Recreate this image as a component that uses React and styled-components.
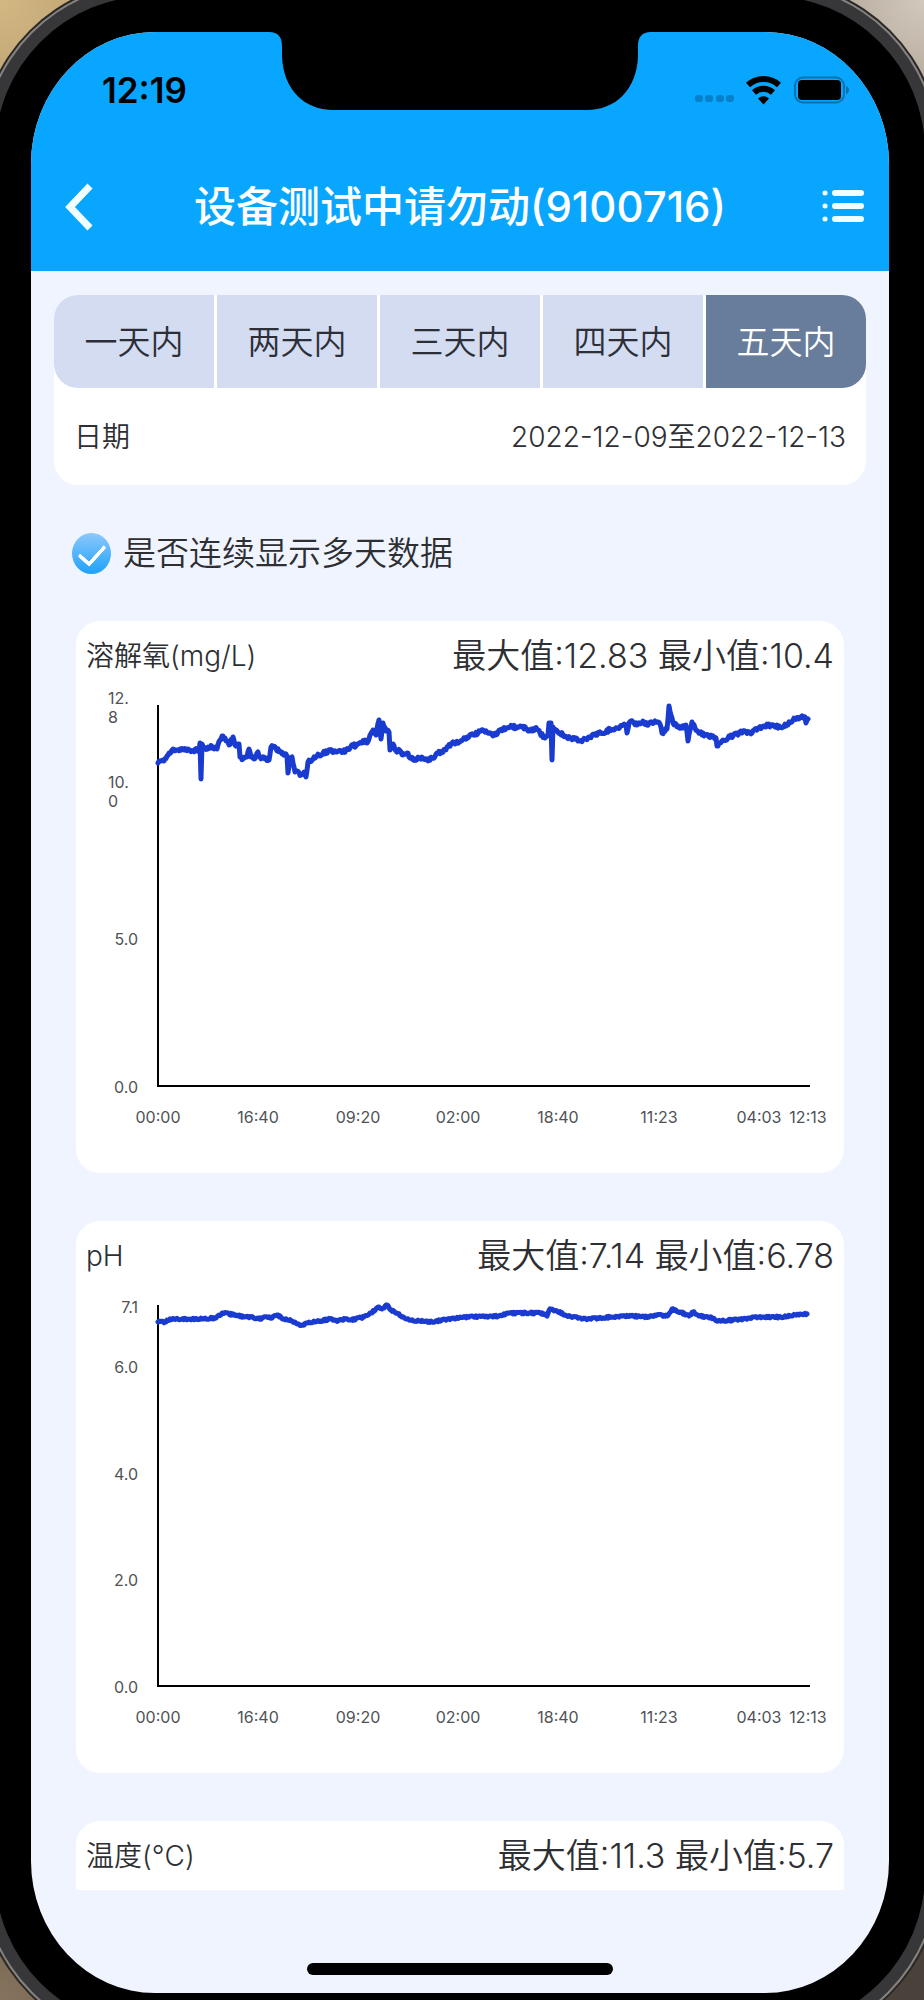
import React, { useState } from 'react';
import styled, { createGlobalStyle } from 'styled-components';

const GlobalStyle = createGlobalStyle`
  * {
    box-sizing: border-box;
  }

  body {
    margin: 0;
    font-family: Inter, 'Noto Sans CJK SC', sans-serif;
    color: #2d2f33;
  }

  button {
    font-family: inherit;
    border: none;
    padding: 0;
    background: none;
    cursor: pointer;
  }
`;

// Desk behind the phone, only visible in the four corners
const Desk = styled.div`
  display: flex;
  flex-direction: column;
  height: 100vh;
  overflow: hidden;
  background:
    radial-gradient(circle at 0 0, #d3b883 0, #bfa574 90px, transparent 110px),
    radial-gradient(circle at 100% 0, #d2c8bc 0, #b5aa9c 90px, transparent 110px),
    radial-gradient(circle at 0 100%, #85735d 0, #75644f 90px, transparent 110px),
    #4b413b;
`;

const Bezel = styled.div`
  flex: 1;
  min-height: 0;
  display: flex;
  margin: -4px -1px -29px -5px;
  padding: 36px;
  border-radius: 156px;
  background: #000;
  box-shadow: 0 0 0 12px #37373a, 0 0 0 14px #85827f, 0 0 0 16px #2a2826;
`;

const Screen = styled.div`
  position: relative;
  flex: 1;
  min-width: 0;
  display: flex;
  flex-direction: column;
  overflow: hidden;
  border-radius: 124px / 132px;
  background: #f0f4ff;
`;

const Notch = styled.svg`
  position: absolute;
  top: 0;
  left: 50%;
  width: 382px;
  height: 78px;
  transform: translateX(-50%);
`;

const Header = styled.header`
  background: #08a6ff;
`;

const StatusBar = styled.div`
  display: flex;
  align-items: center;
  justify-content: space-between;
  height: 111px;
  padding: 5px 40px 0 71px;
  color: #000;
`;

const Clock = styled.span`
  font-size: 35px;
  font-weight: 600;
  line-height: 40px;
`;

const StatusIcons = styled.svg`
  width: 154px;
  height: 32px;
`;

const NavBar = styled.nav`
  display: grid;
  grid-template-columns: 44px 1fr 44px;
  align-items: center;
  height: 128px;
  padding: 0 24px;
`;

const Title = styled.h1`
  margin: 0;
  font-size: 42px;
  font-weight: 500;
  line-height: 56px;
  text-align: center;
  white-space: nowrap;
  color: #fff;
`;

const IconButton = styled.button`
  display: flex;
  align-items: center;
  justify-content: center;
  height: 56px;
  color: #f2ffff;
`;

const Content = styled.main`
  flex: 1;
  min-height: 0;
  overflow-y: auto;
  scrollbar-width: none;
  padding: 24px 23px 48px;
`;

const RangePanel = styled.section`
  border-radius: 24px;
  background: #fff;
`;

const Tabs = styled.div`
  display: grid;
  grid-template-columns: repeat(5, 1fr);
  gap: 3px;
  overflow: hidden;
  border-radius: 24px;
`;

const Tab = styled.button`
  height: 93px;
  font-size: 33px;
  font-weight: 350;
  line-height: 40px;
  background: ${({ $active }) => ($active ? '#687c9b' : '#d3dcf1')};
  color: ${({ $active }) => ($active ? '#fff' : '#2d2f38')};
`;

const DateRow = styled.div`
  display: flex;
  align-items: center;
  justify-content: space-between;
  height: 97px;
  padding: 0 20px;
  font-size: 28px;
  font-weight: 350;
  line-height: 40px;
`;

const CheckRow = styled.label`
  display: flex;
  align-items: center;
  gap: 12px;
  height: 136px;
  padding: 0 18px;
  font-size: 33px;
  font-weight: 350;
  line-height: 40px;
  cursor: pointer;
`;

const CheckBox = styled.input`
  appearance: none;
  display: flex;
  justify-content: center;
  flex: none;
  width: 39px;
  height: 41px;
  margin: 0;
  border-radius: 50%;
  background: #fff;

  &:checked {
    background: linear-gradient(#8cc8fb, #1ea2fb);
  }

  &:checked::before {
    content: '';
    width: 12px;
    height: 22px;
    margin-top: 6px;
    border: solid #fff;
    border-width: 0 4px 4px 0;
    border-radius: 2px;
    transform: rotate(42deg);
  }
`;

const ChartList = styled.div`
  display: flex;
  flex-direction: column;
  gap: 48px;
  padding: 0 22px;
`;

const Card = styled.section`
  min-height: 552px;
  border-radius: 24px;
  background: #fff;
`;

const CardHeader = styled.div`
  display: flex;
  align-items: center;
  justify-content: space-between;
  height: 70px;
  padding: 0 10px;
`;

const CardTitle = styled.h2`
  margin: 0;
  font-size: 28px;
  font-weight: 350;
  line-height: 40px;
`;

const Extremes = styled.span`
  font-size: 34px;
  font-weight: 350;
  line-height: 40px;
`;

const Plot = styled.svg`
  display: block;
  width: 100%;

  text {
    font-size: 16px;
    fill: #505256;
  }
`;

const HomeArea = styled.footer`
  display: flex;
  align-items: flex-end;
  justify-content: center;
  height: 103px;
  padding-bottom: 18px;
`;

const HomeIndicator = styled.div`
  width: 306px;
  height: 12px;
  border-radius: 6px;
  background: #000;
`;

const ranges = ['一天内', '两天内', '三天内', '四天内', '五天内'];

const timeTicks = [
  ['00:00', 82],
  ['16:40', 182],
  ['09:20', 282],
  ['02:00', 382],
  ['18:40', 482],
  ['11:23', 583],
  ['04:03', 683],
  ['12:13', 732],
];

const oxygen = [
  [82, 72], [88, 70], [91, 65], [93, 62], [96, 59], [101, 59], [104, 58], [108, 59], [112, 58],
  [117, 60], [121, 58], [123, 60], [124, 52], [125, 88], [126, 53], [129, 58], [132, 56], [137, 56],
  [141, 58], [144, 49], [147, 45], [150, 50], [153, 54], [157, 46], [159, 54], [163, 53], [164, 66],
  [167, 68], [171, 66], [173, 58], [175, 66], [178, 68], [182, 61], [184, 66], [189, 68], [193, 69],
  [195, 56], [197, 56], [200, 58], [204, 60], [207, 62], [211, 65], [212, 82], [214, 67], [216, 66],
  [218, 76], [219, 81], [221, 80], [225, 84], [228, 81], [230, 86], [232, 71], [236, 69], [241, 65],
  [247, 62], [254, 60], [261, 61], [267, 61], [274, 57], [277, 54], [280, 55], [286, 52], [289, 49],
  [291, 52], [296, 41], [298, 40], [300, 44], [303, 29], [305, 48], [307, 32], [310, 40], [313, 41],
  [314, 59], [317, 53], [320, 60], [324, 60], [327, 64], [331, 62], [334, 67], [339, 68], [344, 67],
  [351, 69], [357, 67], [362, 62], [367, 61], [371, 56], [376, 52], [384, 51], [391, 46], [397, 44],
  [402, 42], [407, 39], [412, 42], [419, 44], [424, 39], [431, 37], [436, 35], [441, 37], [446, 36],
  [451, 38], [456, 40], [459, 37], [464, 42], [469, 47], [472, 44], [473, 32], [475, 32], [476, 69],
  [477, 36], [480, 39], [484, 42], [489, 45], [494, 47], [499, 48], [504, 50], [509, 48], [514, 46],
  [519, 44], [524, 41], [529, 42], [534, 38], [539, 38], [544, 36], [550, 34], [551, 42], [553, 32],
  [557, 31], [561, 34], [568, 31], [571, 34], [576, 32], [579, 30], [582, 31], [585, 36], [586, 42],
  [591, 38], [593, 15], [596, 27], [597, 32], [602, 35], [607, 37], [610, 34], [612, 50], [614, 39],
  [616, 31], [619, 37], [624, 42], [629, 44], [636, 46], [640, 47], [641, 55], [647, 49], [654, 46],
  [661, 43], [667, 40], [676, 42], [682, 37], [692, 34], [704, 36], [711, 34], [717, 29], [726, 25],
  [729, 26], [730, 32], [732, 28],
];

const ph = [
  [82, 31], [89, 31], [94, 28], [106, 28], [122, 28], [140, 27], [147, 22], [160, 24], [168, 26],
  [175, 26], [183, 28], [191, 26], [196, 27], [201, 24], [208, 28], [216, 30], [221, 33], [226, 34],
  [231, 32], [244, 30], [254, 28], [262, 30], [269, 28], [275, 29], [288, 26], [295, 22], [303, 16],
  [306, 18], [311, 14], [315, 19], [321, 22], [326, 26], [333, 29], [344, 30], [356, 31], [372, 28],
  [392, 26], [423, 25], [433, 22], [453, 22], [466, 22], [471, 25], [474, 18], [481, 20], [489, 24],
  [497, 26], [510, 28], [525, 27], [535, 26], [555, 25], [573, 26], [581, 24], [591, 25], [596, 18],
  [604, 21], [613, 25], [617, 21], [624, 25], [637, 27], [642, 30], [657, 29], [683, 26], [708, 26],
  [724, 23], [731, 23],
];

const charts = [
  {
    name: '溶解氧(mg/L)',
    max: '12.83',
    min: '10.4',
    points: oxygen,
    noise: 1.5,
    ticks: [
      { lines: ['12.', '8'], y: 7 },
      { lines: ['10.', '0'], y: 91 },
      { lines: ['5.0'], y: 248 },
      { lines: ['0.0'], y: 396 },
    ],
  },
  {
    name: 'pH',
    max: '7.14',
    min: '6.78',
    points: ph,
    noise: 0.8,
    ticks: [
      { lines: ['7.1'], y: 16 },
      { lines: ['6.0'], y: 76 },
      { lines: ['4.0'], y: 183 },
      { lines: ['2.0'], y: 289 },
      { lines: ['0.0'], y: 396 },
    ],
  },
  { name: '温度(°C)', max: '11.3', min: '5.7' },
];

const toLine = (points, noise) => {
  const out = [];
  points.forEach(([x, y], i) => {
    out.push(`${x},${y}`);
    const next = points[i + 1];
    if (!next) return;
    for (let px = x + 1; px < next[0]; px += 1) {
      const t = (px - x) / (next[0] - x);
      const wobble = Math.sin(px * px * 12.9) * noise;
      out.push(`${px},${(y + (next[1] - y) * t + wobble).toFixed(1)}`);
    }
  });
  return out.join(' ');
};

const LineChart = ({ points, noise, ticks, name }) => (
  <Plot viewBox="0 0 768 482" role="img" aria-label={name}>
    {ticks.map(({ lines, y }) =>
      lines.map((line, i) => (
        <text
          key={y + line}
          x={lines.length > 1 ? 32 : 62}
          y={y + 6 + i * 19}
          textAnchor={lines.length > 1 ? 'start' : 'end'}
        >
          {line}
        </text>
      ))
    )}
    <path d="M82 14V395H734" fill="none" stroke="#000" strokeWidth="2" />
    <polyline
      points={toLine(points, noise)}
      fill="none"
      stroke="#1a3bd0"
      strokeWidth="5"
      strokeLinejoin="round"
      strokeLinecap="round"
    />
    {timeTicks.map(([label, x]) => (
      <text key={label} x={x} y="432" textAnchor="middle">
        {label}
      </text>
    ))}
  </Plot>
);

const App = () => {
  const [range, setRange] = useState(4);
  const [continuous, setContinuous] = useState(true);

  return (
    <Desk>
      <GlobalStyle />
      <Bezel>
        <Screen>
          <Header>
            <StatusBar>
              <Clock>12:19</Clock>
              <StatusIcons viewBox="0 0 154 32" aria-hidden="true">
                <g fill="#0680c8">
                  <rect x="0" y="21" width="8" height="7" rx="3" />
                  <rect x="10" y="21" width="8" height="7" rx="3" />
                  <rect x="21" y="21" width="8" height="7" rx="3" />
                  <rect x="31" y="21" width="8" height="7" rx="3" />
                </g>
                <g fill="none" stroke="#000" strokeWidth="6">
                  <path d="M53 11a23 23 0 0 1 31 0" />
                  <path d="M59 18.500a14 14 0 0 1 19 0" />
                </g>
                <path d="M63 24.500a8 8 0 0 1 11 0l-5.500 6z" fill="#000" />
                <rect x="100" y="3.500" width="49" height="25" rx="8" fill="none" stroke="#0572b2" strokeWidth="2" />
                <rect x="103" y="6" width="43" height="20" rx="4" fill="#000" />
                <path d="M151 12c4 1 4 7 0 8z" fill="#0572b2" />
              </StatusIcons>
            </StatusBar>
            <NavBar>
              <IconButton aria-label="返回">
                <svg width="32" height="48" viewBox="0 0 32 48" fill="none" stroke="currentColor" strokeWidth="7">
                  <path d="M29 3L9 24l20 21" />
                </svg>
              </IconButton>
              <Title>设备测试中请勿动(9100716)</Title>
              <IconButton aria-label="列表">
                <svg width="42" height="34" viewBox="0 0 42 34" stroke="currentColor" strokeLinecap="round">
                  <path d="M13 3H39M13 16H39M13 29H39" strokeWidth="6" />
                  <path d="M3 3h.1M3 16h.1M3 29h.1" strokeWidth="5" />
                </svg>
              </IconButton>
            </NavBar>
          </Header>

          <Content>
            <RangePanel>
              <Tabs>
                {ranges.map((label, i) => (
                  <Tab key={label} $active={i === range} onClick={() => setRange(i)}>
                    {label}
                  </Tab>
                ))}
              </Tabs>
              <DateRow>
                <span>日期</span>
                <span>2022-12-09至2022-12-13</span>
              </DateRow>
            </RangePanel>

            <CheckRow>
              <CheckBox
                type="checkbox"
                checked={continuous}
                onChange={(e) => setContinuous(e.target.checked)}
              />
              是否连续显示多天数据
            </CheckRow>

            <ChartList>
              {charts.map((chart) => (
                <Card key={chart.name}>
                  <CardHeader>
                    <CardTitle>{chart.name}</CardTitle>
                    <Extremes>
                      最大值:{chart.max} 最小值:{chart.min}
                    </Extremes>
                  </CardHeader>
                  {chart.points && <LineChart {...chart} />}
                </Card>
              ))}
            </ChartList>
          </Content>

          <HomeArea>
            <HomeIndicator />
          </HomeArea>

          <Notch viewBox="0 0 382 78" aria-hidden="true">
            <path d="M0 0C9 0 13 5 13 14V24C14 58 36 78 64 78H318C346 78 368 58 369 24V14C369 5 373 0 382 0Z" />
          </Notch>
        </Screen>
      </Bezel>
    </Desk>
  );
};

export default App;
